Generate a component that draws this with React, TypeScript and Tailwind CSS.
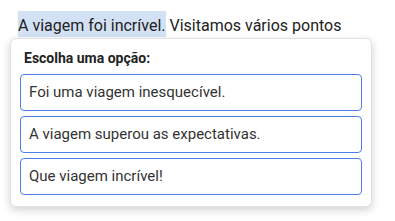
const options = [
  'Foi uma viagem inesquecível.',
  'A viagem superou as expectativas.',
  'Que viagem incrível!',
]

export default function App() {
  return (
    <div className="h-[221px] w-[395px] bg-white font-['Roboto',sans-serif] text-[#222]">
      <div className="h-[38px] pl-[18px] pt-[11px]">
        <p className="text-[16px] leading-[30px] whitespace-nowrap">
          <span className="inline-block h-[26px] bg-[#d3e1f5] leading-[30px]">A viagem foi incrível.</span> Visitamos vários pontos
        </p>
      </div>
      <div className="relative ml-[10px] w-[362px] rounded-md border border-[#e2e2e2] bg-white px-[9px] pb-[11px] pt-[9px] shadow-[0_3px_8px_rgba(0,0,0,0.18)]">
        <p className="px-[4px] text-[14px] font-bold leading-[20px] text-[#222]">Escolha uma opção:</p>
        <div className="mt-[6px] flex flex-col gap-[5px]">
          {options.map((opt) => (
            <button
              key={opt}
              className="flex h-[37px] items-center rounded-[4px] border border-[#4d7ee8] bg-white px-[8px] text-left text-[15px] text-[#333]"
            >
              {opt}
            </button>
          ))}
        </div>
      </div>
    </div>
  )
}
